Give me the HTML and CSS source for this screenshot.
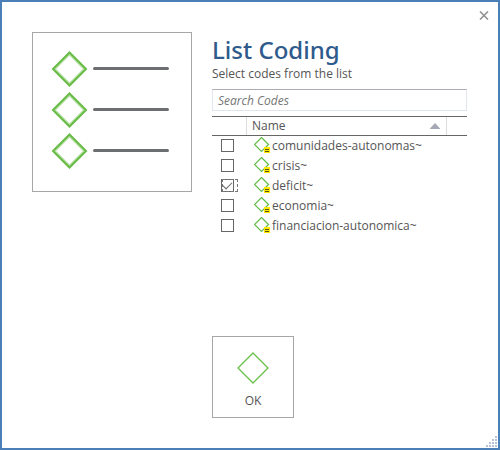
FILE: index.html
```html
<!DOCTYPE html>
<html lang="en">
<head>
<meta charset="utf-8">
<title>List Coding</title>
<link rel="stylesheet" href="styles.css">
</head>
<body>
<svg class="defs" aria-hidden="true">
  <symbol id="code" viewBox="0 0 17 18">
    <path d="M7.500 .5 14.500 7.500 7.500 14.500 .5 7.500Z" fill="#fff" stroke="#62bb46" stroke-width="1.2"/>
    <g shape-rendering="crispEdges">
      <rect x="10" y="10" width="6" height="6" fill="#ffe800"/>
      <rect x="11" y="12" width="4" height="1" fill="#57501a"/>
      <rect x="11" y="14" width="4" height="1" fill="#57501a"/>
    </g>
  </symbol>
</svg>
<main class="dialog">
  <button class="close" type="button" aria-label="Close">
    <svg width="10" height="9" viewBox="0 0 10 9"><path d="M1 .5 9 8.5M9 .5 1 8.5" stroke="#929292" stroke-width="1.6"/></svg>
  </button>
  <div class="picture">
    <svg width="122" height="124" viewBox="0 0 122 124" aria-hidden="true">
      <g fill="none" stroke="#b5e0a2" stroke-width="1.6">
        <path d="M18.500 4.500 33 19 18.500 33.500 4 19ZM18.500 45.500 33 60 18.500 74.500 4 60ZM18.500 86.500 33 101 18.500 115.500 4 101Z"/>
      </g>
      <g fill="none" stroke="#68bb45" stroke-width="2">
        <path d="M18.500 2.500 35 19 18.500 35.500 2 19ZM18.500 43.500 35 60 18.500 76.500 2 60ZM18.500 84.500 35 101 18.500 117.500 2 101Z"/>
      </g>
      <path d="M43.500 18.500h73M43.500 59.500h73M43.500 100.500h73" stroke="#6d6e71" stroke-width="3" stroke-linecap="round"/>
    </svg>
  </div>
  <form class="content">
    <h1 class="title">List Coding</h1>
    <p class="subtitle">Select codes from the list</p>
    <input class="search" type="search" placeholder="Search Codes" aria-label="Search Codes">
    <table class="codes">
      <colgroup><col class="col-check"><col><col class="col-end"></colgroup>
      <thead>
        <tr>
          <th aria-label="Selected"></th>
          <th aria-sort="ascending"><button class="sort" type="button">Name
            <svg width="10" height="6" viewBox="0 0 10 6" aria-hidden="true"><path d="M5 0 10 5.500V6H0V5.500Z" fill="#a5a9b5"/></svg></button></th>
          <th></th>
        </tr>
      </thead>
      <tbody>
        <tr>
          <td><input class="check" type="checkbox" id="c1"></td>
          <td colspan="2"><label class="code" for="c1"><svg width="17" height="18"><use href="#code"/></svg>comunidades-autonomas~</label></td>
        </tr>
        <tr>
          <td><input class="check" type="checkbox" id="c2"></td>
          <td colspan="2"><label class="code" for="c2"><svg width="17" height="18"><use href="#code"/></svg>crisis~</label></td>
        </tr>
        <tr class="current">
          <td><input class="check" type="checkbox" id="c3" checked></td>
          <td colspan="2"><label class="code" for="c3"><svg width="17" height="18"><use href="#code"/></svg>deficit~</label></td>
        </tr>
        <tr>
          <td><input class="check" type="checkbox" id="c4"></td>
          <td colspan="2"><label class="code" for="c4"><svg width="17" height="18"><use href="#code"/></svg>economia~</label></td>
        </tr>
        <tr>
          <td><input class="check" type="checkbox" id="c5"></td>
          <td colspan="2"><label class="code" for="c5"><svg width="17" height="18"><use href="#code"/></svg>financiacion-autonomica~</label></td>
        </tr>
      </tbody>
    </table>
    <button class="ok" type="button">
      <svg width="32" height="32" viewBox="0 0 32 32" aria-hidden="true"><path d="M16 1 31 16 16 31 1 16Z" fill="none" stroke="#68bf45" stroke-width="1.300"/></svg>
      OK
    </button>
  </form>
  <svg class="grip" width="11" height="11" viewBox="0 0 11 11" aria-hidden="true">
    <path d="M9 0h2v2H9zM6 3h2v2H6zM9 3h2v2H9zM3 6h2v2H3zM6 6h2v2H6zM9 6h2v2H9zM0 9h2v2H0zM3 9h2v2H3zM6 9h2v2H6zM9 9h2v2H9z" fill="#b8c2d6"/>
  </svg>
</main>
</body>
</html>
```
FILE: styles.css
```css
* {
  box-sizing: border-box;
}

body {
  margin: 0;
  color: #555;
  background: #fff;
  font: 12px/16px "Open Sans", "Noto Sans", sans-serif;
}

button,
input {
  margin: 0;
  padding: 0;
  border: 0;
  background: none;
  color: inherit;
  font: inherit;
}

svg {
  display: block;
  flex: none;
}

.defs {
  display: none;
}

.dialog {
  position: relative;
  display: grid;
  grid-template-columns: 160px 1fr;
  gap: 20px;
  min-height: 100vh;
  padding: 30px 31px 30px 30px;
  border: 2px solid #4a7fb8;
}

.close {
  position: absolute;
  top: 9px;
  right: 9px;
}

.picture {
  display: flex;
  align-items: center;
  justify-content: center;
  align-self: start;
  aspect-ratio: 1;
  border: 1px solid #a6a6a6;
}

.content {
  display: flex;
  flex-direction: column;
}

.title {
  margin: 0;
  padding-top: 2px;
  color: #2f5b8c;
  font-family: "Noto Sans", sans-serif;
  font-size: 24px;
  font-weight: 500;
  line-height: 32px;
}

.subtitle {
  margin: 0 0 7px;
}

.search {
  height: 22px;
  margin-bottom: 5px;
  padding: 1px 5px 0;
  border: 1px solid #e1e5ee;
  border-top-color: #abadb3;
  font-style: italic;
  appearance: none;
}

.search::placeholder {
  color: #757575;
  opacity: 1;
}

.codes {
  width: 100%;
  margin-bottom: 100px;
  border-collapse: separate;
  border-spacing: 0;
  table-layout: fixed;
}

.col-check {
  width: 35px;
}

.col-end {
  width: 20px;
}

.codes th,
.codes td {
  height: 20px;
  padding: 0;
  font-weight: 400;
  vertical-align: middle;
}

.codes th {
  border: solid #666;
  border-width: 1px 0;
  background: linear-gradient(#dcdcdc, #dcdcdc) right / 1px 100% no-repeat;
}

.codes th:last-child {
  background: none;
}

.sort {
  display: flex;
  align-items: center;
  justify-content: space-between;
  width: 100%;
  padding: 0 7px 0 5px;
}

.check {
  display: block;
  width: 13px;
  height: 13px;
  margin: 0 0 1px 9px;
  border: 1px solid #666;
  appearance: none;
}

.check:checked::before {
  content: "";
  display: block;
  width: 8px;
  height: 4px;
  margin: 2px 1px;
  border: solid #666;
  border-width: 0 0 1px 1px;
  rotate: -45deg;
}

.current .check {
  position: relative;
}

.current .check::after {
  content: "";
  position: absolute;
  inset: -1px -5px -1px 0;
  border: 1px dashed #777;
}

.code {
  display: flex;
  align-items: center;
  gap: 1px;
  padding-left: 7px;
}

.ok {
  display: flex;
  flex-direction: column;
  align-items: center;
  justify-content: center;
  gap: 9px;
  width: 82px;
  height: 82px;
  padding-top: 6px;
  border: 1px solid #a6a6a6;
}

.grip {
  position: absolute;
  right: 1px;
  bottom: 1px;
}
```
